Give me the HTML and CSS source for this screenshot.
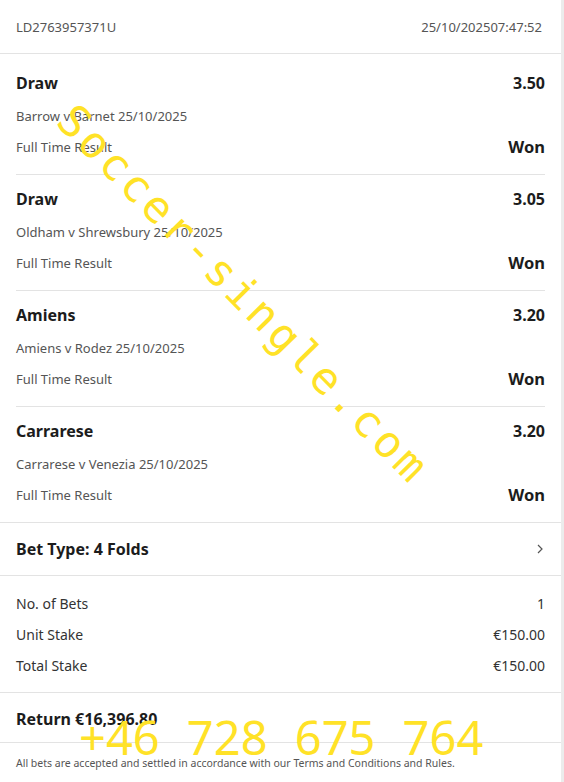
FILE: index.html
```html
<!DOCTYPE html>
<html lang="en">
<head>
    <meta charset="UTF-8">
    <meta name="viewport" content="width=device-width, initial-scale=1.0">
    <title>Bet Slip LD2763957371U</title>
    <link rel="stylesheet" href="styles.css">
</head>
<body>

    <div class="slip">
        <div class="slip-header">
            <span>LD2763957371U</span>
            <span>25/10/202507:47:52</span>
        </div>

        <div class="selections">
            <div class="selection">
                <div class="row title"><span>Draw</span><span>3.50</span></div>
                <div class="row sub"><span>Barrow v Barnet 25/10/2025</span></div>
                <div class="row sub"><span>Full Time Result</span><span class="result">Won</span></div>
            </div>
            <div class="selection">
                <div class="row title"><span>Draw</span><span>3.05</span></div>
                <div class="row sub"><span>Oldham v Shrewsbury 25/10/2025</span></div>
                <div class="row sub"><span>Full Time Result</span><span class="result">Won</span></div>
            </div>
            <div class="selection">
                <div class="row title"><span>Amiens</span><span>3.20</span></div>
                <div class="row sub"><span>Amiens v Rodez 25/10/2025</span></div>
                <div class="row sub"><span>Full Time Result</span><span class="result">Won</span></div>
            </div>
            <div class="selection">
                <div class="row title"><span>Carrarese</span><span>3.20</span></div>
                <div class="row sub"><span>Carrarese v Venezia 25/10/2025</span></div>
                <div class="row sub"><span>Full Time Result</span><span class="result">Won</span></div>
            </div>
        </div>

        <div class="bet-type">
            <span>Bet Type: 4 Folds</span>
            <svg class="chevron" width="8" height="12" viewBox="0 0 8 12">
                <polyline points="2,2 6,6 2,10" fill="none" stroke="#555" stroke-width="1.2"/>
            </svg>
        </div>

        <div class="stakes">
            <div class="stake-row"><span>No. of Bets</span><span>1</span></div>
            <div class="stake-row"><span>Unit Stake</span><span>€150.00</span></div>
            <div class="stake-row"><span>Total Stake</span><span>€150.00</span></div>
        </div>

        <div class="return">Return €16,396.80</div>

        <div class="terms">All bets are accepted and settled in accordance with our Terms and Conditions and Rules.</div>

        <div class="watermark">Soccer-single.com</div>
        <div class="phone">+46 728 675 764</div>
    </div>

</body>
</html>
```

FILE: styles.css
```css
body {
    margin: 0;
    background: #ececec;
    font-family: "Noto Sans", "Open Sans", sans-serif;
    color: #1c1c1c;
}
.slip {
    position: relative;
    width: 561px;
    min-height: 782px;
    background: #fff;
    overflow: hidden;
}
.slip-header {
    display: flex;
    justify-content: space-between;
    padding: 17px 19px 16px 16px;
    line-height: 20px;
    font-size: 13px;
    color: #555;
    border-bottom: 1px solid #e3e3e3;
}
.selections {
    padding: 5px 16px 0;
    border-bottom: 1px solid #e3e3e3;
}
.selection {
    padding: 13px 0 16px;
    border-bottom: 1px solid #e3e3e3;
}
.selection:last-child {
    border-bottom: none;
}
.row {
    display: flex;
    justify-content: space-between;
    line-height: 22px;
}
.row.title {
    font-size: 16px;
    font-weight: bold;
}
.row.sub {
    font-size: 13px;
    color: #555;
    margin-top: 11px;
}
.row.sub + .row.sub {
    margin-top: 9px;
}
.row .result {
    font-size: 16.5px;
    font-weight: bold;
    color: #1c1c1c;
}
.bet-type {
    display: flex;
    justify-content: space-between;
    align-items: center;
    padding: 15px 17px 15px 16px;
    line-height: 22px;
    font-size: 16px;
    font-weight: bold;
    border-bottom: 1px solid #e3e3e3;
}
.stakes {
    display: flex;
    flex-direction: column;
    gap: 11px;
    padding: 18px 16px 16px;
    border-bottom: 1px solid #e3e3e3;
}
.stake-row {
    display: flex;
    justify-content: space-between;
    line-height: 20px;
    font-size: 14px;
    color: #333;
}
.return {
    padding: 15px 16px 12px;
    line-height: 22px;
    font-size: 16px;
    font-weight: bold;
    border-bottom: 1px solid #e3e3e3;
}
.terms {
    padding: 12px 16px;
    line-height: 16px;
    font-size: 10.5px;
    color: #555;
}
.watermark {
    position: absolute;
    left: 244px;
    top: 294px;
    transform: translate(-50%, -50%) rotate(45.5deg);
    font-family: "DejaVu Sans Mono", monospace;
    font-size: 44px;
    letter-spacing: 3.5px;
    color: #ffe227;
    white-space: nowrap;
}
.phone {
    position: absolute;
    left: 79px;
    top: 709px;
    font-size: 47px;
    line-height: 56px;
    word-spacing: 15px;
    color: #ffe227;
    white-space: nowrap;
}
```
